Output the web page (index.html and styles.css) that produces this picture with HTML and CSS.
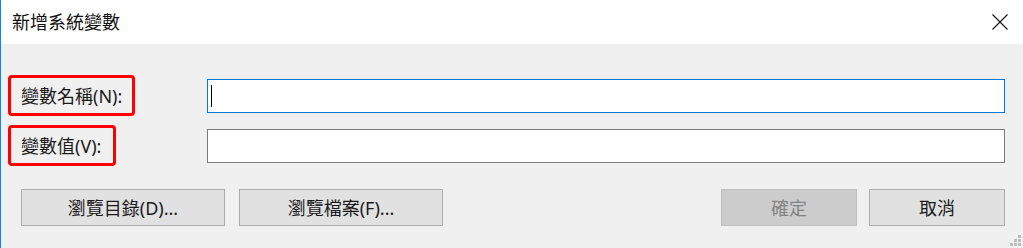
FILE: index.html
```html
<!DOCTYPE html>
<html lang="zh-Hant">
<head>
    <meta charset="UTF-8">
    <title>新增系統變數</title>
    <link rel="stylesheet" href="styles.css">
</head>
<body>
    <div class="dialog">
        <!-- Title bar -->
        <div class="titlebar">
            <span class="title">新增系統變數</span>
            <svg class="close" width="16" height="16" viewBox="0 0 16 16">
                <path d="M0.5 0.5 L15.5 15.5 M15.5 0.5 L0.5 15.5" stroke="#111" stroke-width="1.1" fill="none"/>
            </svg>
        </div>

        <div class="content">
            <div class="fields">
                <div class="label-box wide">變數名稱(N):</div>
                <div class="textbox active"><span class="caret"></span></div>

                <div class="label-box">變數值(V):</div>
                <div class="textbox"></div>
            </div>

            <div class="buttons">
                <button class="btn">瀏覽目錄(D)...</button>
                <button class="btn">瀏覽檔案(F)...</button>
                <span class="spacer"></span>
                <button class="btn small" disabled>確定</button>
                <button class="btn small">取消</button>
            </div>

            <div class="grip">
                <span></span><span></span><span></span>
                <span></span><span></span><span></span>
            </div>
        </div>
    </div>
</body>
</html>
```

FILE: styles.css
```css
* {
    margin: 0;
    padding: 0;
    box-sizing: border-box;
}

body {
    width: 1023px;
    height: 248px;
    overflow: hidden;
    font-family: "Noto Sans", "Noto Sans CJK TC", sans-serif;
    font-size: 18px;
    color: #000;
}

.dialog {
    position: relative;
    height: 248px;
    border-left: 1px solid #1883d7;
    background: #f0f0f0;
}

.titlebar {
    height: 44px;
    background: #fff;
    display: flex;
    align-items: center;
    justify-content: space-between;
    padding: 0 15px 0 11px;
}

.title {
    font-size: 18px;
    line-height: 20px;
    color: #111;
}

.close {
    display: block;
    margin-top: -1px;
}

.content {
    padding: 31px 18px 0 7px;
}

.fields {
    display: grid;
    grid-template-columns: 199px 1fr;
    grid-template-rows: 41px 41px;
    row-gap: 9px;
    align-items: center;
}

.label-box {
    justify-self: start;
    height: 41px;
    width: 108px;
    border: 3px solid #ff0000;
    border-radius: 4px;
    padding-left: 10px;
    display: flex;
    align-items: center;
    line-height: 20px;
    white-space: nowrap;
    color: #1a1a1a;
}

.label-box.wide {
    width: 127px;
}

.textbox {
    height: 34px;
    background: #fff;
    border: 1px solid #7a7a7a;
    display: flex;
    align-items: center;
    padding-left: 3px;
}

.textbox.active {
    border-color: #0078d7;
}

.caret {
    width: 1px;
    height: 22px;
    background: #000;
}

.buttons {
    display: flex;
    margin-top: 23px;
    padding-left: 13px;
    gap: 14px;
}

.btn {
    width: 204px;
    height: 37px;
    background: #e1e1e1;
    border: 1px solid #adadad;
    font-family: inherit;
    font-size: 18px;
    color: #1a1a1a;
    line-height: 20px;
}

.btn.small {
    width: 136px;
}

.btn[disabled] {
    background: #cccccc;
    border-color: #bfbfbf;
    color: #838383;
}

.spacer {
    flex: 1;
}

.buttons .btn.small + .btn.small {
    margin-left: -2px;
}

.grip {
    position: absolute;
    right: 2px;
    bottom: 2px;
    width: 11px;
    height: 11px;
}

.grip span {
    position: absolute;
    width: 3px;
    height: 3px;
    background: #bdbdbd;
}

.grip span:nth-child(1) { right: 0; top: 0; }
.grip span:nth-child(2) { right: 0; top: 4px; }
.grip span:nth-child(3) { right: 4px; top: 4px; }
.grip span:nth-child(4) { right: 0; top: 8px; }
.grip span:nth-child(5) { right: 4px; top: 8px; }
.grip span:nth-child(6) { right: 8px; top: 8px; }
```
